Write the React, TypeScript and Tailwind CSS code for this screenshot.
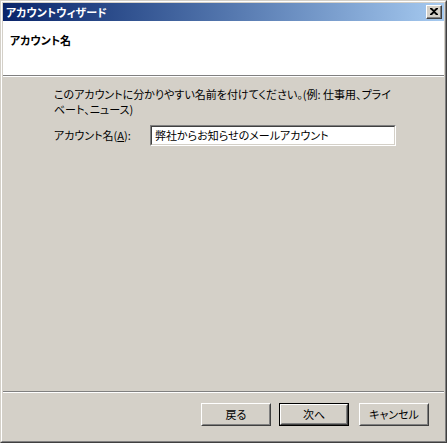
import React from "react";

const font = "font-['MS_UI_Gothic','Noto_Sans_CJK_JP',sans-serif] [font-feature-settings:'palt']";

const Button = ({ label, isDefault, className }: { label: string; isDefault?: boolean; className?: string }) => {
  const inner = (
    <div className="h-full w-full border border-t-white border-l-white border-r-[#404040] border-b-[#404040]">
      <div className="flex h-full w-full items-center justify-center border border-t-[#d4d0c8] border-l-[#d4d0c8] border-r-[#808080] border-b-[#808080] text-[11px] text-black">
        {label}
      </div>
    </div>
  );
  if (isDefault) {
    return <div className={`h-[23px] w-[70px] border border-black ${className ?? ""}`}>{inner}</div>;
  }
  return <div className={`h-[23px] w-[70px] ${className ?? ""}`}>{inner}</div>;
};

const App = () => {
  return (
    <div className={`${font} h-[443px] w-[447px] border border-t-[#d4d0c8] border-l-[#d4d0c8] border-r-[#404040] border-b-[#404040] bg-[#d4d0c8]`}>
      <div className="flex h-full w-full flex-col border border-t-white border-l-white border-r-[#808080] border-b-[#808080] p-px">
        {/* title bar */}
        <div className="flex h-[18px] shrink-0 items-center justify-between bg-gradient-to-r from-[#0a246a] to-[#a6caf0] pl-[3px] pr-[2px]">
          <span className="text-[11px] font-bold leading-none text-white">アカウントウィザード</span>
          <div className="h-[14px] w-[16px] border border-t-white border-l-white border-r-[#404040] border-b-[#404040] bg-[#d4d0c8]">
            <div className="flex h-full w-full items-center justify-center border-r border-b border-[#808080]">
              <svg width="8" height="7" viewBox="0 0 8 7">
                <path d="M0 0h2l2 2 2-2h2v1L5 3.5 8 6v1H6L4 5 2 7H0V6l3-2.5L0 1z" fill="#000" />
              </svg>
            </div>
          </div>
        </div>

        {/* header */}
        <div className="h-[54px] shrink-0 bg-white pl-[7px] pt-[12px]">
          <div className="text-[11px] font-bold leading-[14px] text-black">アカウント名</div>
        </div>
        <div className="h-px shrink-0 bg-[#808080]" />
        <div className="h-px shrink-0 bg-white" />

        {/* body */}
        <div className="flex-1 pl-[51px] pt-[10px] text-[11px] text-black">
          <p className="whitespace-nowrap leading-[15px]">
            このアカウントに分かりやすい名前を付けてください。(例: 仕事用、プライ
            <br />
            ベート、ニュース)
          </p>
          <div className="mt-[8px] flex items-center">
            <span className="w-[96px] whitespace-nowrap">
              アカウント名(<span className="underline">A</span>):
            </span>
            <div className="h-[21px] w-[246px] border border-t-[#808080] border-l-[#808080] border-r-white border-b-white">
              <div className="flex h-full w-full items-center whitespace-nowrap border border-t-[#404040] border-l-[#404040] border-r-[#d4d0c8] border-b-[#d4d0c8] bg-white pl-[3px]">
                弊社からお知らせのメールアカウント
              </div>
            </div>
          </div>
        </div>

        {/* separator */}
        <div className="h-px shrink-0 bg-[#808080]" />
        <div className="h-px shrink-0 bg-white" />

        {/* buttons */}
        <div className="flex h-[47px] shrink-0 items-start justify-end pr-[15px] pt-[10px]">
          <Button label="戻る" />
          <Button label="次へ" isDefault className="ml-[8px]" />
          <Button label="キャンセル" className="ml-[10px]" />
        </div>
      </div>
    </div>
  );
};

export default App;
